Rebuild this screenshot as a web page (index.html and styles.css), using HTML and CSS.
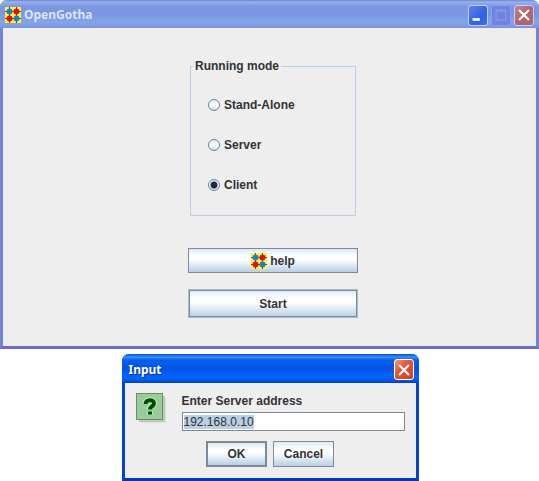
FILE: index.html
```
<!DOCTYPE html>
<html lang="en">
<head>
<meta charset="utf-8">
<title>OpenGotha</title>
<link rel="stylesheet" href="styles.css">
</head>
<body>
<svg class="defs" aria-hidden="true">
  <symbol id="stones" viewBox="0 0 16 16">
    <rect width="16" height="16" fill="#fff23a"/>
    <path d="M4.500 0v16M11.500 0v16M0 4.500h16M0 11.500h16" stroke="#55502a" stroke-width="1"/>
    <circle cx="4.500" cy="4.500" r="3" fill="#1c80cc"/>
    <circle cx="11.500" cy="4.500" r="3" fill="#e80c0c"/>
    <circle cx="4.500" cy="11.500" r="3" fill="#e80c0c"/>
    <circle cx="11.500" cy="11.500" r="3" fill="#1c80cc"/>
  </symbol>
  <symbol id="cross" viewBox="0 0 20 20">
    <path d="M4.500 4.500l11 11M15.500 4.500l-11 11" stroke="#fff" stroke-width="2.400"/>
  </symbol>
</svg>

<main class="window">
  <header class="titlebar">
    <svg class="logo"><use href="#stones"/></svg>
    <h1 class="title">OpenGotha</h1>
    <div class="controls">
      <button class="control minimize" type="button" aria-label="Minimize">
        <svg viewBox="0 0 20 20"><path d="M4 15h8" stroke="#fff" stroke-width="3"/></svg>
      </button>
      <button class="control maximize" type="button" aria-label="Maximize" disabled>
        <svg viewBox="0 0 20 20"><path d="M4.500 4.500h11v11h-11zM4.500 5.500h11" fill="none" stroke="#8f9ff0"/></svg>
      </button>
      <button class="control close" type="button" aria-label="Close"><svg><use href="#cross"/></svg></button>
    </div>
  </header>
  <form class="content">
    <fieldset class="modes">
      <legend>Running mode</legend>
      <label class="mode"><input type="radio" name="mode">Stand-Alone</label>
      <label class="mode"><input type="radio" name="mode">Server</label>
      <label class="mode"><input type="radio" name="mode" checked>Client</label>
    </fieldset>
    <button class="button help" type="button"><svg class="logo"><use href="#stones"/></svg>help</button>
    <button class="button default start" type="button">Start</button>
  </form>
</main>

<section class="dialog" role="dialog" aria-labelledby="dialog-title">
  <header class="titlebar">
    <h2 class="title" id="dialog-title">Input</h2>
    <div class="controls">
      <button class="control close" type="button" aria-label="Close"><svg><use href="#cross"/></svg></button>
    </div>
  </header>
  <form class="prompt">
    <div class="question">
      <svg class="question-icon" viewBox="0 0 32 32" aria-hidden="true">
        <rect x="4" y="4" width="26" height="26" rx="2" fill="#dcdedc"/>
        <rect x="3" y="3" width="26" height="26" rx="1" fill="#c2c6c2"/>
        <rect x=".5" y=".5" width="26" height="26" fill="#99cc99" stroke="#6c8c6c"/>
        <path d="M9.500 11C9.500 6 18 6 18 10.500c0 3-4 2.500-4 6M14 18.500v3" fill="none" stroke="#c9edc4" stroke-width="6"/>
        <path d="M9.500 11C9.500 6 18 6 18 10.500c0 3-4 2.500-4 6M14 18.500v3" fill="none" stroke="#004d00" stroke-width="4"/>
      </svg>
      <div class="field">
        <label for="address">Enter Server address</label>
        <input id="address" type="text" value="192.168.0.10">
      </div>
    </div>
    <div class="actions">
      <button class="button default" type="button">OK</button>
      <button class="button" type="button">Cancel</button>
    </div>
  </form>
</section>
<script src="script.js"></script>
</body>
</html>
```

FILE: styles.css
```
* { box-sizing: border-box; }

body {
  margin: 0;
  background: #fff;
  color: #333;
  font: bold 12px/15px "Liberation Sans", Arial, sans-serif;
}

.defs { position: absolute; width: 0; height: 0; }
svg { display: block; }
button, input { font: inherit; color: inherit; margin: 0; }
.logo { width: 16px; height: 16px; flex: none; }

.window, .dialog {
  border: solid;
  border-width: 0 3px 3px;
  border-radius: 7px 7px 0 0;
  background: #eee;
}
.window { border-color: #7780d8 #7780d8 #6a6fc4; }
.dialog {
  width: 297px;
  margin: 5px 0 0 calc(50% - 148px);
  border-color: #0842d0 #0842d0 #0636b8;
}

.titlebar {
  display: flex;
  align-items: center;
  gap: 3px;
  height: 28px;
  margin: 0 -3px;
  padding: 2px 5px 0;
  border-radius: 7px 7px 0 0;
  background: linear-gradient(#7183d8, #98b2ed 2px, #7e97e2 6px, #7b95e1 14px, #83a6e8 22px, #7c93df);
  color: #d8e4fb;
}
.dialog .titlebar {
  height: 29px;
  padding: 2px 5px 0 7px;
  background: linear-gradient(#0b49c9, #3592fb 3px, #0560ec 6px, #0054e3 14px, #0164fb 22px, #0261f6 25px, #0040c8);
  color: #fff;
}
.title {
  flex: 1;
  margin: 0;
  font: bold 12px/16px "Noto Sans", sans-serif;
}
.dialog .title { text-shadow: 1px 1px #0b2f8c; }

.controls { display: flex; gap: 3px; }
.control {
  width: 20px;
  height: 21px;
  padding: 0;
  border: 1px solid #c3d0f7;
  border-radius: 3px;
}
.control svg { width: 18px; height: 18px; }
.minimize { background: linear-gradient(135deg, #5c83ec, #2f62e2 60%, #3c70f0); }
.maximize { background: #6e83e2; border-color: #8a9eec; }
.close { background: linear-gradient(135deg, #c48494, #b3656f 50%, #ac6670); }
.dialog .close {
  border-color: #fff;
  background: linear-gradient(135deg, #f09a80, #e0563a 40%, #d4401c);
}

.content {
  display: flex;
  flex-direction: column;
  align-items: center;
  padding: 31px 0 28px 7px;
}
.modes {
  width: 166px;
  margin: 0 0 32px;
  padding: 11px 17px 10px;
  border: 1px solid #b8cfe5;
}
.modes legend {
  margin-left: -15px;
  padding: 0 2px;
}
.mode {
  display: flex;
  align-items: center;
  gap: 4px;
  height: 40px;
  line-height: 17px;
}
.mode input {
  appearance: none;
  width: 12px;
  height: 12px;
  border: 1px solid #6f8297;
  border-radius: 50%;
  background: linear-gradient(#dce9f5, #fff 50%, #c8dcee);
}
.mode input:checked {
  background: radial-gradient(circle, #222a35 3px, transparent 4px), linear-gradient(#dce9f5, #fff 50%, #c8dcee);
}

.button {
  display: flex;
  align-items: center;
  justify-content: center;
  gap: 3px;
  height: 26px;
  padding: 1px 0 0;
  border: 1px solid #7a8a99;
  background: linear-gradient(#dde8f3, #fff 30%, #fff 45%, #b8cfe5);
}
.button.default { border-width: 2px; }
.help, .start { width: 170px; }
.help { height: 25px; margin-bottom: 16px; }
.button.start {
  height: 29px;
  border: 1px solid #a3bcd4;
  box-shadow: inset 0 0 0 1px #7a8a99;
}

.prompt { padding: 10px 11px 11px; }
.question { display: flex; gap: 14px; }
.question-icon { width: 32px; height: 32px; flex: none; }
.field { flex: 1; }
.field label { display: block; margin-bottom: 2px; line-height: 17px; }
.field input {
  display: block;
  width: 223px;
  height: 19px;
  padding: 0 1px;
  border: 1px solid #7a8a99;
  outline: 0;
  background: #fff;
  font-weight: normal;
  line-height: 17px;
}
.field input::selection { background: #b8cfe5; color: #333; }
.actions {
  display: flex;
  justify-content: center;
  gap: 6px;
  margin-top: 10px;
}
.actions .button { width: 61px; }
```

FILE: script.js
```
const address = document.getElementById("address");
address.focus();
address.select();
```
